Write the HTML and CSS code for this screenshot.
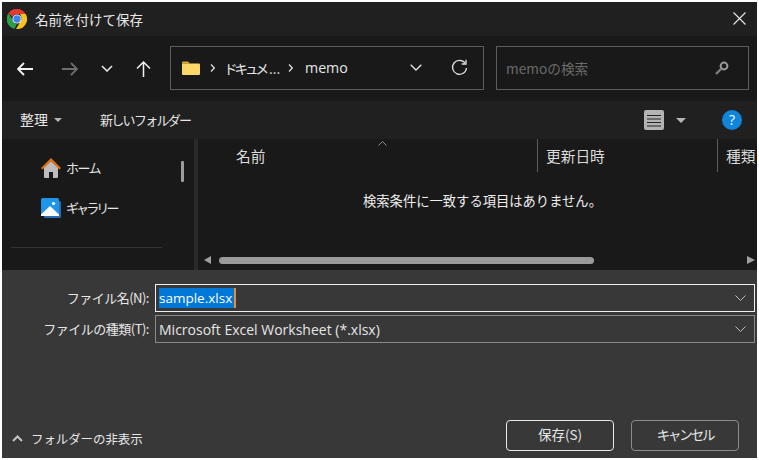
FILE: index.html
```html
<!DOCTYPE html>
<html lang="ja">
<head>
<meta charset="utf-8">
<title>名前を付けて保存</title>
<link rel="stylesheet" href="styles.css">
</head>
<body>
<div class="window">
  <header class="titlebar">
    <svg class="chrome" viewBox="0 0 20 20" width="20" height="20">
      <path d="M10 0a10 10 0 0 1 8.66 5H10a5 5 0 0 0-4.6 3L1.6 4A10 10 0 0 1 10 0z" fill="#e5392f"/>
      <path d="M1.6 4l4.2 7.4A5 5 0 0 0 10 15l-2.6 4.7A10 10 0 0 1 1.6 4z" fill="#2d9f47"/>
      <path d="M18.66 5A10 10 0 0 1 9 20l4.3-7.3A5 5 0 0 0 14 7 5 5 0 0 0 13 5z" fill="#f8c41c"/>
      <circle cx="10" cy="10" r="4.6" fill="#fff"/>
      <circle cx="10" cy="10" r="3.7" fill="#3f83ee"/>
    </svg>
    <span class="title">名前を付けて保存</span>
    <svg class="close" viewBox="0 0 13 13" width="13" height="13"><path d="M.5.5l12 12M12.5.5l-12 12" stroke="#e8e8e8" stroke-width="1.1" fill="none"/></svg>
  </header>

  <nav class="navbar">
    <svg class="nav-back" viewBox="0 0 16 14" width="16" height="14"><path d="M7 1L1 7l6 6M1 7h15" stroke="#f2f2f2" stroke-width="1.8" fill="none"/></svg>
    <svg class="nav-forward" viewBox="0 0 16 14" width="16" height="14"><path d="M9 1l6 6-6 6M15 7H0" stroke="#6e6e6e" stroke-width="1.8" fill="none"/></svg>
    <svg class="nav-down" viewBox="0 0 12 7" width="12" height="7"><path d="M1 1l5 5 5-5" stroke="#e4e4e4" stroke-width="1.6" fill="none"/></svg>
    <svg class="nav-up" viewBox="0 0 15 16" width="15" height="16"><path d="M1 7.5l6.5-6.5 6.5 6.5M7.5 1v15" stroke="#f2f2f2" stroke-width="1.5" fill="none"/></svg>
    <div class="address">
      <svg class="folder" viewBox="0 0 18 14" width="18" height="14">
        <path d="M0 1.5A1 1 0 0 1 1 .5h5l2 2H0z" fill="#e8a722"/>
        <path d="M0 2.5h17a1 1 0 0 1 1 1V13a1 1 0 0 1-1 1H1a1 1 0 0 1-1-1z" fill="#fbd668"/>
      </svg>
      <svg class="crumb-sep first" viewBox="0 0 5 8" width="5" height="8"><path d="M1 .5L4.3 4 1 7.5" stroke="#e0e0e0" stroke-width="1.2" fill="none"/></svg>
      <span class="crumb">ドキュメ<span class="dots">...</span></span>
      <svg class="crumb-sep second" viewBox="0 0 5 8" width="5" height="8"><path d="M1 .5L4.3 4 1 7.5" stroke="#e0e0e0" stroke-width="1.2" fill="none"/></svg>
      <span class="crumb-last">memo</span>
      <svg class="addr-down" viewBox="0 0 12 7" width="12" height="7"><path d="M.7.7L6 6 11.3.7" stroke="#e4e4e4" stroke-width="1.3" fill="none"/></svg>
      <svg class="refresh" viewBox="0 0 17 17" width="17" height="17"><path d="M14.2 4.2A7 7 0 1 0 15.5 9" stroke="#e0e0e0" stroke-width="1.3" fill="none"/><path d="M15 .8v4.2h-4.3" stroke="#e0e0e0" stroke-width="1.3" fill="none"/></svg>
    </div>
    <div class="search">
      <span class="search-text">memoの検索</span>
      <svg class="magnifier" viewBox="0 0 14 14" width="14" height="14"><circle cx="9" cy="5" r="3.4" stroke="#9a9a9a" stroke-width="2" fill="none"/><path d="M6.5 7.5L1 13" stroke="#7d7d7d" stroke-width="2.4" fill="none"/></svg>
    </div>
  </nav>

  <div class="toolbar">
    <span class="tool-organize">整理</span>
    <span class="caret organize-caret"></span>
    <span class="tool-new">新しいフォルダー</span>
    <svg class="view-icon" viewBox="0 0 20 20" width="20" height="20">
      <rect width="20" height="20" rx="2" fill="#b3b3b3"/>
      <path d="M3 5.5h14M3 9h14M3 12.500h14M3 16h14" stroke="#222" stroke-width="1.2"/>
    </svg>
    <span class="caret view-caret"></span>
    <span class="help">?</span>
  </div>

  <main class="browser">
    <aside class="sidebar">
      <div class="side-list">
        <div class="side-item home-item">
          <svg viewBox="0 0 20 20" width="20" height="20">
            <path d="M3 9.500L10 3l7 6.500V19a1 1 0 0 1-1 1h-4v-6H8v6H4a1 1 0 0 1-1-1z" fill="#bdbdbd"/>
            <path d="M0 10L10 0l10 10-1.500 1.500L10 3.200 1.500 11.500z" fill="#e2730e"/>
          </svg>
          <span class="side-home">ホーム</span>
        </div>
        <div class="side-item gallery-item">
          <svg viewBox="0 0 20 20" width="20" height="20">
            <rect x="3" y="3" width="17" height="17" rx="1.500" fill="#2a6db4"/>
            <rect width="18" height="18" rx="1.500" fill="#1d95e8"/>
            <path d="M0 16.500L9 8l9 8.500V18H0z" fill="#fff"/>
            <circle cx="12.500" cy="5.500" r="1.600" fill="#fff"/>
          </svg>
          <span class="side-gallery">ギャラリー</span>
        </div>
        <div class="side-divider"></div>
      </div>
      <div class="side-scroll"><div class="side-thumb"></div></div>
    </aside>
    <div class="splitter"></div>
    <section class="files">
      <div class="columns">
        <div class="col col-name">名前<svg class="sort" viewBox="0 0 9 5" width="9" height="5"><path d="M.5 4.500l4-4 4 4" stroke="#8e8e8e" fill="none"/></svg></div>
        <div class="col col-date">更新日時</div>
        <div class="col col-type">種類</div>
      </div>
      <div class="empty">検索条件に一致する項目はありません。</div>
      <div class="hscroll">
        <span class="arrow-left"></span>
        <span class="hthumb"></span>
        <span class="arrow-right"></span>
      </div>
    </section>
  </main>

  <section class="form">
    <div class="row row-name">
      <label class="label label-name">ファイル名(N):</label>
      <div class="field focused">
        <span class="selected">sample.xlsx</span><span class="caret-line"></span>
        <svg class="field-down" viewBox="0 0 11 6" width="11" height="6"><path d="M.5.500l5 5 5-5" stroke="#bdbdbd" fill="none"/></svg>
      </div>
    </div>
    <div class="row row-type">
      <label class="label">ファイルの種類(T):</label>
      <div class="field">
        <span class="value">Microsoft Excel Worksheet (*.xlsx)</span>
        <svg class="field-down" viewBox="0 0 11 6" width="11" height="6"><path d="M.5.500l5 5 5-5" stroke="#bdbdbd" fill="none"/></svg>
      </div>
    </div>
    <div class="actions">
      <svg class="hide-chevron" viewBox="0 0 11 7" width="11" height="7"><path d="M1 6l4.500-4.500L10 6" stroke="#c4c4c4" stroke-width="2" fill="none"/></svg>
      <span class="hide-text">フォルダーの非表示</span>
      <button class="btn primary">保存(S)</button>
      <button class="btn btn-cancel">キャンセル</button>
    </div>
  </section>
</div>
</body>
</html>
```

FILE: styles.css
```css
* { box-sizing: border-box; }
html, body { margin: 0; height: 100%; }
body {
  background: #fff;
  padding: 2px;
  overflow: hidden;
  font-family: "Noto Sans CJK JP", "Open Sans", sans-serif;
  font-size: 13.5px;
  color: #e6e6e6;
}
.window { width: 755px; height: 456px; display: flex; flex-direction: column; background: #191919; }
svg { display: block; flex: none; }

.titlebar { height: 34px; flex: none; display: flex; align-items: center; background: #202020; padding-left: 5px; }
.title { margin-left: 8px; font-size: 13.5px; color: #e8e8e8; }
.close { margin-left: auto; margin-right: 11px; margin-top: -1px; }

.navbar { height: 65px; flex: none; display: flex; align-items: center; background: #191919; }
.nav-back { margin-left: 15px; }
.nav-forward { margin-left: 29px; }
.nav-down { margin-left: 23px; }
.nav-up { margin-left: 23px; }
.address, .search { height: 44px; border: 1px solid #5c5c5c; display: flex; align-items: center; margin-top: -2px; }
.address { width: 314px; margin-left: 19px; }
.folder { margin-left: 11px; }
.crumb-sep.first { margin-left: 10px; }
.crumb { margin-left: 9px; font-size: 13.5px; letter-spacing: -3px; width: 52px; white-space: nowrap; }
.dots { letter-spacing: 0; margin-left: 3px; }
.crumb-sep.second { margin-left: 12px; }
.crumb-last { margin-left: 12px; width: 42px; font-family: "Open Sans", sans-serif; font-size: 14.2px; }
.addr-down { margin-left: 63px; }
.refresh { margin-left: 29px; }
.search { width: 253px; margin-left: 12px; }
.search-text { margin-left: 9px; color: #6a6a6a; font-size: 13.7px; }
.magnifier { margin-left: auto; margin-right: 19px; }

.toolbar { height: 38px; flex: none; display: flex; align-items: center; background: #202020; }
.tool-organize { margin-left: 18px; margin-bottom: 2px; font-size: 14px; }
.caret { width: 0; height: 0; border-left: 4px solid transparent; border-right: 4px solid transparent; border-top: 4px solid #b5b5b5; }
.organize-caret { margin-left: 6px; }
.tool-new { margin-left: 38px; margin-bottom: 2px; font-size: 13px; letter-spacing: -1.7px; }
.view-icon { margin-left: auto; }
.view-caret { margin-left: 12px; border-left-width: 5px; border-right-width: 5px; border-top-width: 5px; }
.help { margin-left: 36px; margin-right: 15px; width: 20px; height: 20px; border-radius: 50%; background: #0f85dc; color: #fff; font-family: "Open Sans", sans-serif; font-size: 14px; line-height: 20px; text-align: center; }

.browser { height: 131px; flex: none; display: flex; background: #191919; }
.sidebar { width: 192px; flex: none; display: flex; }
.side-list { width: 177px; flex: none; padding: 19px 0 0 39px; }
.side-item { display: flex; align-items: center; gap: 5px; height: 20px; font-size: 13px; white-space: nowrap; }
.side-home { letter-spacing: -1.6px; margin-bottom: 2px; }
.side-gallery { letter-spacing: -2.9px; margin-bottom: 2px; }
.gallery-item { margin-top: 20px; }
.side-divider { margin: 29px 0 0 -30px; width: 151px; height: 1px; background: #343434; }
.side-scroll { padding: 22px 0 0 2px; }
.side-thumb { width: 3px; height: 21px; background: #9c9c9c; border-radius: 1px; }
.splitter { width: 4px; flex: none; background: #2a2a2a; }
.files { flex: 1; display: flex; flex-direction: column; min-width: 0; }
.columns { display: flex; height: 33px; flex: none; overflow: hidden; }
.col { font-size: 14.7px; padding-top: 6px; white-space: nowrap; color: #dcdcdc; }
.col-name { width: 340px; padding-left: 38px; position: relative; border-right: 1px solid #5c5c5c; }
.col-date { width: 180px; padding-left: 8px; border-right: 1px solid #5c5c5c; }
.col-type { padding-left: 8px; }
.sort { position: absolute; left: 180px; top: 2px; }
.empty { height: 84px; flex: none; text-align: center; font-size: 13.3px; padding: 19px 0 0 10px; color: #eee; }
.hscroll { height: 14px; flex: none; display: flex; align-items: flex-start; padding: 0 0 0 6px; }
.arrow-left { width: 0; height: 0; border-top: 4.5px solid transparent; border-bottom: 4.5px solid transparent; border-right: 7px solid #a0a0a0; }
.hthumb { width: 375px; height: 7px; margin: 1px 0 0 8px; border-radius: 3.5px; background: #9a9a9a; }
.arrow-right { width: 0; height: 0; margin-left: auto; margin-right: 2px; border-top: 4.5px solid transparent; border-bottom: 4.5px solid transparent; border-left: 8px solid #a0a0a0; }

.form { flex: 1; background: #383838; display: flex; flex-direction: column; }
.row { display: flex; align-items: center; height: 28px; }
.row-name { margin-top: 14px; }
.row-type { margin-top: 3px; }
.label { width: 147px; margin-bottom: 2px; text-align: right; font-size: 13px; letter-spacing: -0.5px; white-space: nowrap; }
.field { margin-left: 6px; width: 600px; height: 28px; border: 1px solid #8a8a8a; display: flex; align-items: center; padding: 0 8px 0 3px; font-family: "Open Sans", sans-serif; font-size: 13.5px; white-space: nowrap; }
.field.focused { border-color: #f0f0f0; }
.selected { background: #0078d7; color: #fff; height: 20px; line-height: 20px; width: 75px; }
.caret-line { width: 2px; height: 20px; background: #e98b3d; }
.value { font-size: 14px; }
.field-down { margin-left: auto; }
.actions { display: flex; align-items: flex-start; margin-top: 77px; }
.hide-chevron { margin: 15px 0 0 10px; }
.hide-text { margin: 9px 0 0 8px; font-size: 12.5px; letter-spacing: -0.1px; white-space: nowrap; }
.btn { width: 108px; height: 31px; margin-left: 17px; border: 1px solid #8c8c8c; border-radius: 4px; background: #383838; color: #e6e6e6; font: inherit; font-size: 13.5px; padding: 0 0 3px; }
.btn.primary { margin-left: auto; border-color: #e8e8e8; }
.btn-cancel { margin-right: 18px; letter-spacing: -2.2px; }
```
